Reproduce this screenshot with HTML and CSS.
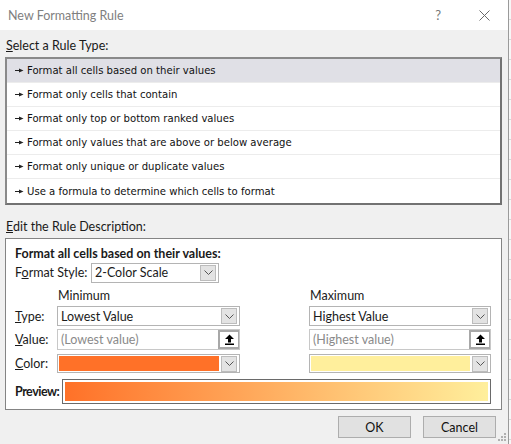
FILE: index.html
```html
<!DOCTYPE html>
<html>
<head>
<meta charset="utf-8">
<link rel="stylesheet" href="styles.css">
</head>
<body>
<div class="page">
  <div class="dialog">
    <div class="titlebar">
      <span class="title">New Formatting Rule</span>
      <span class="help">?</span>
      <svg class="close" width="11" height="11" viewBox="0 0 11 11"><path d="M0.5 0.5L10.5 10.5M10.5 0.5L0.5 10.5" stroke="#6a6a6a" stroke-width="1"/></svg>
    </div>
    <div class="content">
      <div class="section-label"><u>S</u>elect a Rule Type:</div>
      <div class="listbox">
        <div class="row selected"><svg class="ptr" width="9" height="5" viewBox="0 0 9 5"><path d="M0 2.5h5" stroke="#222" stroke-width="1"/><path d="M4 0.5L8.5 2.5L4 4.5z" fill="#222"/></svg>Format all cells based on their values</div>
        <div class="row"><svg class="ptr" width="9" height="5" viewBox="0 0 9 5"><path d="M0 2.5h5" stroke="#222" stroke-width="1"/><path d="M4 0.5L8.5 2.5L4 4.5z" fill="#222"/></svg>Format only cells that contain</div>
        <div class="row"><svg class="ptr" width="9" height="5" viewBox="0 0 9 5"><path d="M0 2.5h5" stroke="#222" stroke-width="1"/><path d="M4 0.5L8.5 2.5L4 4.5z" fill="#222"/></svg>Format only top or bottom ranked values</div>
        <div class="row"><svg class="ptr" width="9" height="5" viewBox="0 0 9 5"><path d="M0 2.5h5" stroke="#222" stroke-width="1"/><path d="M4 0.5L8.5 2.5L4 4.5z" fill="#222"/></svg>Format only values that are above or below average</div>
        <div class="row"><svg class="ptr" width="9" height="5" viewBox="0 0 9 5"><path d="M0 2.5h5" stroke="#222" stroke-width="1"/><path d="M4 0.5L8.5 2.5L4 4.5z" fill="#222"/></svg>Format only unique or duplicate values</div>
        <div class="row last"><svg class="ptr" width="9" height="5" viewBox="0 0 9 5"><path d="M0 2.5h5" stroke="#222" stroke-width="1"/><path d="M4 0.5L8.5 2.5L4 4.5z" fill="#222"/></svg>Use a formula to determine which cells to format</div>
      </div>
      <div class="section-label second"><u>E</u>dit the Rule Description:</div>
      <div class="descbox">
        <div class="desc-head">Format all cells based on their values:</div>
        <div class="style-row">
          <span class="lbl">F<u>o</u>rmat Style:</span>
          <div class="combo style-combo"><span class="ctext">2-Color Scale</span><span class="dd"><svg width="9" height="5" viewBox="0 0 9 5"><path d="M0.5 0.5L4.5 4.5L8.5 0.5" stroke="#555" fill="none"/></svg></span></div>
        </div>
        <div class="grid">
          <span></span><span class="colhead">Minimum</span><span></span><span class="colhead">Maximum</span>
          <span class="lbl"><u>T</u>ype:</span>
          <div class="combo"><span class="ctext">Lowest Value</span><span class="dd"><svg width="9" height="5" viewBox="0 0 9 5"><path d="M0.5 0.5L4.5 4.5L8.5 0.5" stroke="#555" fill="none"/></svg></span></div>
          <span></span>
          <div class="combo"><span class="ctext">Highest Value</span><span class="dd"><svg width="9" height="5" viewBox="0 0 9 5"><path d="M0.5 0.5L4.5 4.5L8.5 0.5" stroke="#555" fill="none"/></svg></span></div>
          <span class="lbl"><u>V</u>alue:</span>
          <div class="valuebox"><span class="vtext">(Lowest value)</span><span class="ref"><svg width="11" height="11" viewBox="0 0 11 11"><path d="M5.5 0.5L10 5H7v3.5H4V5H1z" fill="#000"/><rect x="1" y="9.5" width="9" height="1.5" fill="#000"/></svg></span></div>
          <span></span>
          <div class="valuebox"><span class="vtext">(Highest value)</span><span class="ref"><svg width="11" height="11" viewBox="0 0 11 11"><path d="M5.5 0.5L10 5H7v3.5H4V5H1z" fill="#000"/><rect x="1" y="9.5" width="9" height="1.5" fill="#000"/></svg></span></div>
          <span class="lbl"><u>C</u>olor:</span>
          <div class="combo color"><span class="swatch min"></span><span class="dd"><svg width="9" height="5" viewBox="0 0 9 5"><path d="M0.5 0.5L4.5 4.5L8.5 0.5" stroke="#555" fill="none"/></svg></span></div>
          <span></span>
          <div class="combo color"><span class="swatch max"></span><span class="dd"><svg width="9" height="5" viewBox="0 0 9 5"><path d="M0.5 0.5L4.5 4.5L8.5 0.5" stroke="#555" fill="none"/></svg></span></div>
        </div>
        <div class="preview-row">
          <span class="plbl">Preview:</span>
          <div class="preview"><div class="gradient"></div></div>
        </div>
      </div>
      <div class="buttons">
        <button class="btn">OK</button>
        <button class="btn">Cancel</button>
      </div>
      <svg class="grip" width="9" height="9" viewBox="0 0 9 9"><g fill="#b0b0b0"><rect x="6" y="0" width="2" height="2"/><rect x="3" y="3" width="2" height="2"/><rect x="6" y="3" width="2" height="2"/><rect x="0" y="6" width="2" height="2"/><rect x="3" y="6" width="2" height="2"/><rect x="6" y="6" width="2" height="2"/></g></svg>
    </div>
  </div>
  <div class="strip"></div>
</div>
</body>
</html>
```

FILE: styles.css
```css
* { box-sizing: border-box; }
html, body { margin: 0; padding: 0; }
body {
  font-family: Lato, "Noto Sans", sans-serif;
  font-size: 12.5px;
  color: #1a1a1a;
  background: #f0f0f0;
}
.page {
  display: flex;
  width: 511px;
  height: 444px;
  overflow: hidden;
}
.dialog {
  width: 509px;
  height: 444px;
  border-right: 1px solid #9a9a9a;
  display: flex;
  flex-direction: column;
  background: #f0f0f0;
}
.strip {
  width: 2px;
  background: repeating-linear-gradient(to bottom, #f7f7f7 0, #f7f7f7 19px, #d8d8d8 19px, #d8d8d8 20px);
}
.titlebar {
  height: 30px;
  background: #fff;
  display: flex;
  align-items: center;
  padding-left: 8px;
}
.title {
  color: #808080;
  flex: 1;
}
.help {
  color: #777;
  font-size: 13px;
  margin-right: 38px;
}
.close { margin-right: 18px; }
.content {
  position: relative;
  flex: 1;
  padding: 8px 6px 0 5px;
}
.section-label {
  padding-left: 1px;
  height: 19px;
  line-height: 16px;
}
.section-label.second {
  margin-top: 14px;
  height: 19px;
}
.listbox {
  width: 497px;
  height: 148px;
  border: 2px solid #727272;
  border-left-color: #8a8a8a;
  border-top-color: #8a8a8a;
  background: #fff;
}
.row {
  height: 24px;
  border-bottom: 1px solid #ececec;
  display: flex;
  align-items: center;
  padding-left: 8px;
  font-family: "DejaVu Sans", sans-serif;
  font-size: 10.1px;
  color: #111;
}
.row.last { border-bottom: none; }
.row.selected { background: #e0e0e6; }
.ptr { margin-right: 3px; flex: none; }
.descbox {
  width: 497px;
  height: 172px;
  border: 1px solid #848484;
  background: #fff;
  padding: 7px 9px 0 9px;
}
.desc-head {
  font-weight: bold;
  height: 16px;
  line-height: 16px;
}
.style-row {
  display: flex;
  align-items: center;
  height: 21px;
}
.style-row .lbl { width: 76px; }
.style-combo { width: 128px; height: 20px; }
.combo {
  display: flex;
  align-items: center;
  border: 1px solid #b4b4b4;
  background: #fff;
  padding: 1px 2px 1px 0;
  height: 20px;
}
.ctext { flex: 1; padding-left: 3px; }
.dd {
  width: 16px;
  height: 16px;
  background: #e3e3e3;
  border: 1px solid #bcbcbc;
  display: flex;
  align-items: center;
  justify-content: center;
}
.grid {
  display: grid;
  grid-template-columns: 42px 183px 69px 182px;
  grid-template-rows: 18px 20px 23px 21px;
  row-gap: 2px;
  align-items: center;
  margin-top: 3px;
}
.colhead { padding-left: 1px; }
.grid .combo { height: 20px; }
.valuebox {
  display: flex;
  height: 21px;
  border: 1px solid #c8c8c8;
  background: #fff;
}
.vtext { flex: 1; color: #8a8a8a; padding-left: 3px; line-height: 19px; }
.ref {
  width: 21px;
  border: 2px solid #a8a8a8;
  border-right-width: 1px;
  background: #fff;
  display: flex;
  align-items: center;
  justify-content: center;
}
.combo.color { height: 19px; padding: 1px 2px 1px 1px; }
.swatch { flex: 1; height: 15px; margin-right: 2px; }
.swatch.min { background: #ff7128; }
.swatch.max { background: #ffef9c; }
.preview-row {
  display: flex;
  align-items: center;
  margin-top: 5px;
}
.plbl { font-weight: bold; width: 47px; flex: none; font-size: 12.5px; letter-spacing: -0.5px; }
.preview {
  width: 429px;
  height: 25px;
  border: 1px solid #6a6a6a;
  padding: 2px;
  background: #fff;
}
.gradient {
  height: 100%;
  background: linear-gradient(to right, #ff7128, #ffef9c);
}
.buttons {
  display: flex;
  justify-content: flex-end;
  gap: 12px;
  padding-right: 6px;
  margin-top: 6px;
}
.btn {
  font-family: Lato, "Noto Sans", sans-serif;
  font-size: 12.5px;
  color: #111;
  width: 73px;
  height: 22px;
  background: #e1e1e1;
  border: 1px solid #adadad;
  padding: 0;
}
.grip {
  position: absolute;
  right: 1px;
  bottom: 2px;
}
```
